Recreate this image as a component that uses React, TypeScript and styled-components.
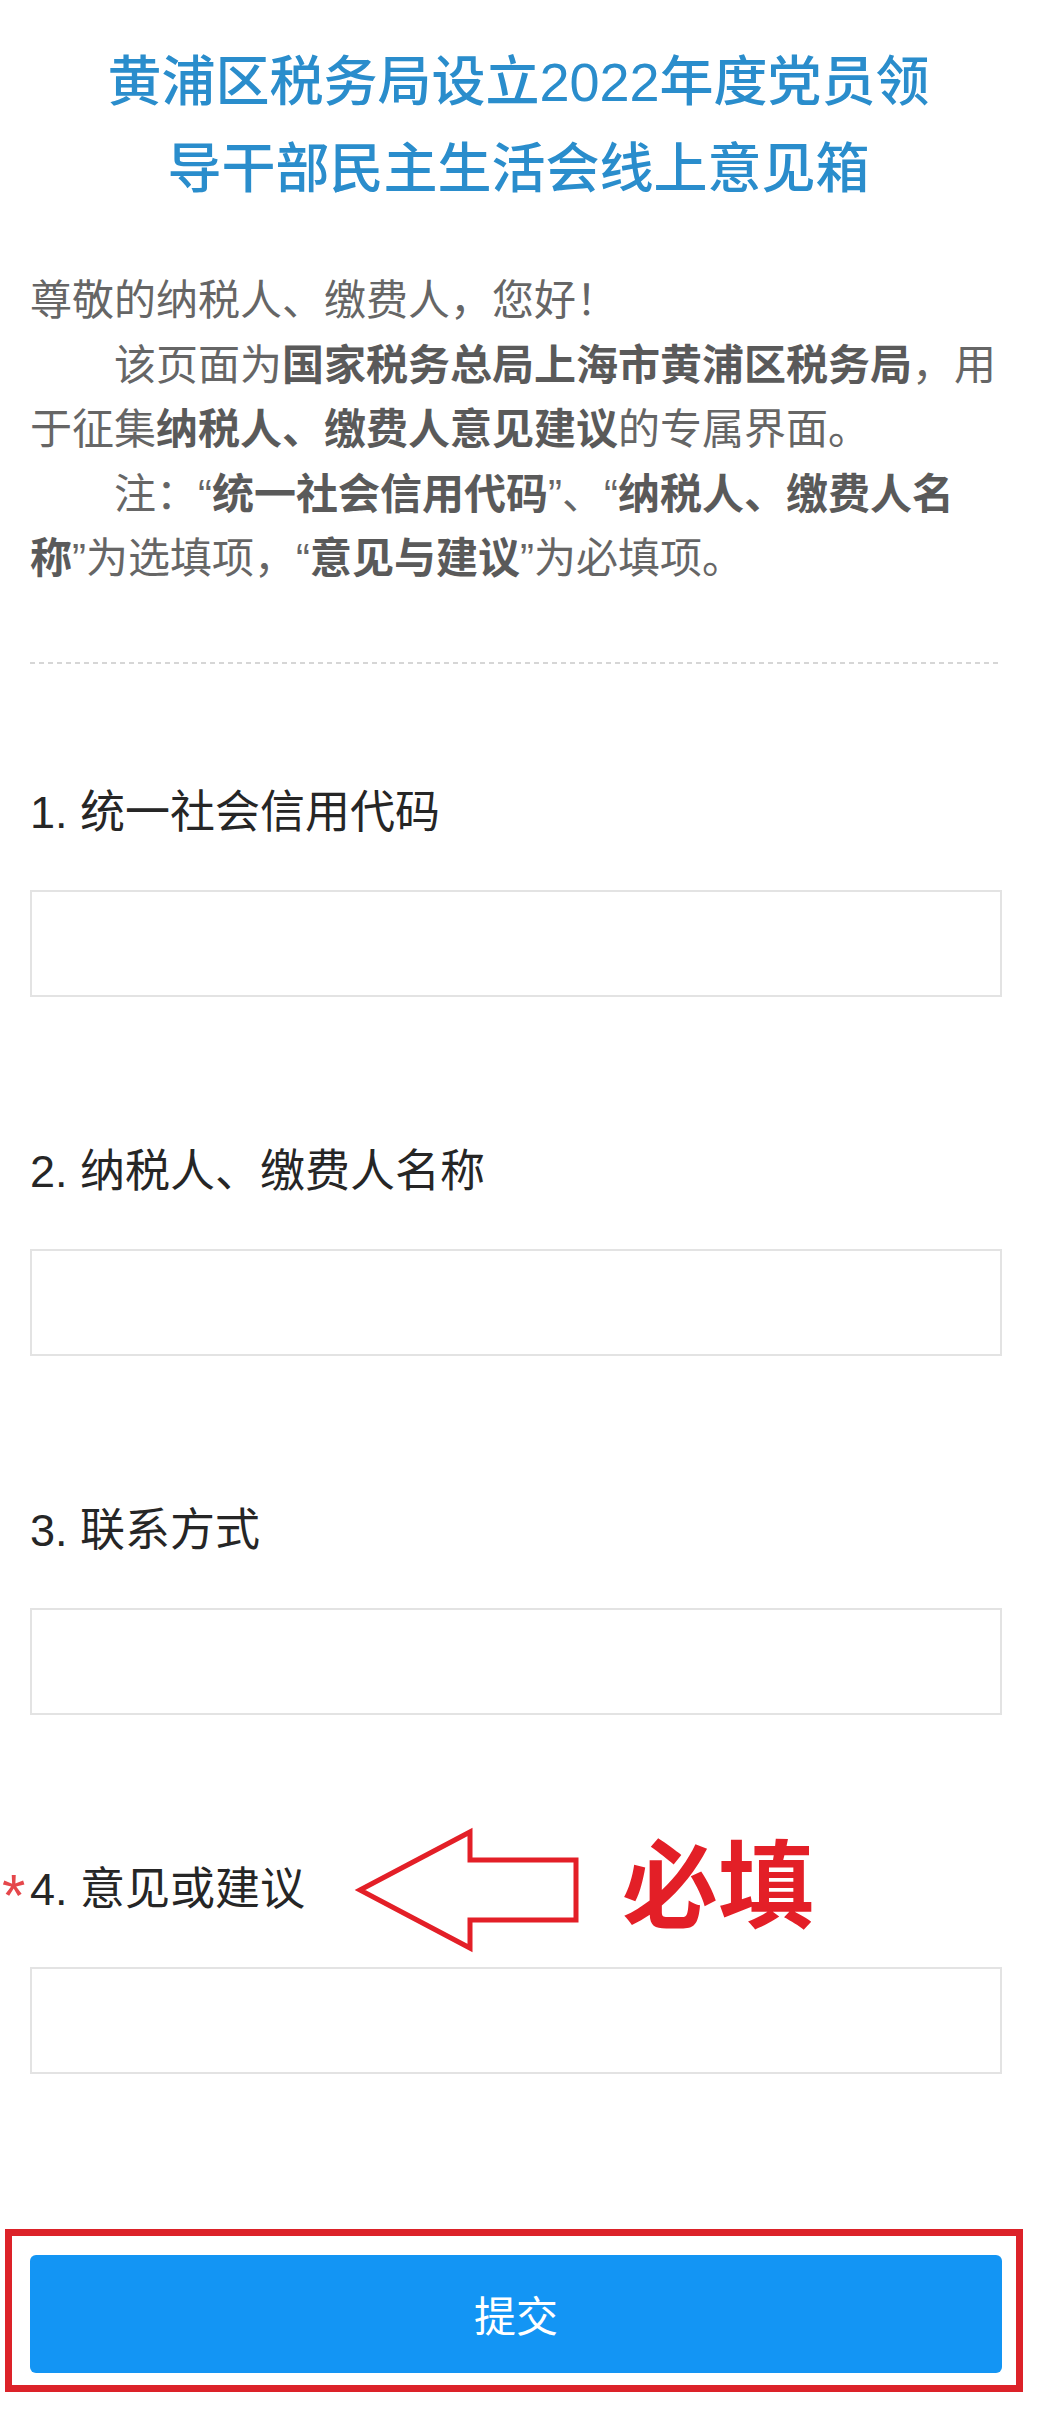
import React from "react";
import styled, { createGlobalStyle } from "styled-components";

const GlobalStyle = createGlobalStyle`
  html, body {
    margin: 0;
    padding: 0;
    background: #ffffff;
  }
  body {
    font-family: "Liberation Sans", "Noto Sans CJK SC", sans-serif;
    -webkit-font-smoothing: antialiased;
  }
  * { box-sizing: border-box; }
`;

const Page = styled.div`
  width: 1037px;
  background: #ffffff;
  padding-bottom: 17px;
`;

const Title = styled.h1`
  margin: 39px auto 0;
  max-width: 850px;
  text-align: center;
  font-size: 54px;
  line-height: 87px;
  font-weight: 500;
  color: #2a8dcc;
`;

const Intro = styled.div`
  margin: 56px 0 0 30px;
  width: 972px;
  font-size: 42px;
  line-height: 64.5px;
  color: #666666;
`;

const Para = styled.p<{ $indent?: boolean }>`
  margin: 0;
  text-indent: ${(p) => (p.$indent ? "2em" : "0")};
`;

const Strong = styled.b`
  font-weight: 700;
  color: #5a5a5a;
`;

const Divider = styled.div`
  margin: 70px 35px 0 30px;
  height: 2px;
  background-image: repeating-linear-gradient(
    to right,
    #d6d6d6 0 5px,
    transparent 5px 9px
  );
`;

const Form = styled.form`
  padding: 0 35px 0 30px;
`;

const Field = styled.div<{ $first?: boolean }>`
  margin-top: ${(p) => (p.$first ? "119px" : "145px")};
`;

const Label = styled.label`
  position: relative;
  display: block;
  height: 60px;
  font-size: 45px;
  line-height: 60px;
  color: #262626;
`;

const Required = styled.span`
  position: absolute;
  left: -28px;
  top: 6px;
  font-size: 60px;
  line-height: 60px;
  color: #e5474b;
`;

const TextInput = styled.input`
  display: block;
  margin-top: 47px;
  width: 100%;
  height: 107px;
  border: 2px solid #e3e3e3;
  border-radius: 0;
  background: #ffffff;
  padding: 0 20px;
  font-size: 42px;
  font-family: inherit;
  outline: none;
  appearance: none;
`;

const ArrowMark = styled.svg`
  position: absolute;
  left: 326px;
  top: -32px;
  width: 224px;
  height: 124px;
  overflow: visible;
`;

const MustFill = styled.span`
  position: absolute;
  left: 592px;
  top: -29px;
  font-family: "Noto Sans CJK SC", sans-serif;
  font-size: 96px;
  line-height: 96px;
  font-weight: 700;
  color: #e31f27;
  white-space: nowrap;
`;

const SubmitFrame = styled.div`
  margin: 155px 14px 0 5px;
  border: 7px solid #dc2229;
  padding: 19px 14px 12px 18px;
`;

const SubmitButton = styled.button`
  display: block;
  width: 100%;
  height: 118px;
  border: none;
  border-radius: 6px;
  background: #1395f4;
  color: #ffffff;
  font-family: inherit;
  font-size: 42px;
  cursor: pointer;
`;

const fields = [
  { no: 1, text: "统一社会信用代码" },
  { no: 2, text: "纳税人、缴费人名称" },
  { no: 3, text: "联系方式" },
];

export default function App() {
  return (
    <Page>
      <GlobalStyle />
      <Title>黄浦区税务局设立2022年度党员领导干部民主生活会线上意见箱</Title>
      <Intro>
        <Para>尊敬的纳税人、缴费人，您好！</Para>
        <Para $indent>
          该页面为<Strong>国家税务总局上海市黄浦区税务局</Strong>，用于征集
          <Strong>纳税人、缴费人意见建议</Strong>的专属界面。
        </Para>
        <Para $indent>
          注：“<Strong>统一社会信用代码</Strong>”、“<Strong>纳税人、缴费人名称</Strong>”为选填项，“<Strong>意见与建议</Strong>”为必填项。
        </Para>
      </Intro>
      <Divider />
      <Form onSubmit={(e) => e.preventDefault()}>
        {fields.map((f, i) => (
          <Field key={f.no} $first={i === 0}>
            <Label>
              {f.no}. {f.text}
            </Label>
            <TextInput type="text" />
          </Field>
        ))}
        <Field>
          <Label>
            <Required>*</Required>
            4. 意见或建议
            <ArrowMark viewBox="0 0 224 124" aria-hidden="true">
              <path
                d="M4 62 L114 4 L114 32 L220 32 L220 92 L114 92 L114 120 Z"
                fill="#ffffff"
                stroke="#e31f27"
                strokeWidth="5"
                strokeLinejoin="miter"
              />
            </ArrowMark>
            <MustFill>必填</MustFill>
          </Label>
          <TextInput type="text" />
        </Field>
      </Form>
      <SubmitFrame>
        <SubmitButton type="button">提交</SubmitButton>
      </SubmitFrame>
    </Page>
  );
}
